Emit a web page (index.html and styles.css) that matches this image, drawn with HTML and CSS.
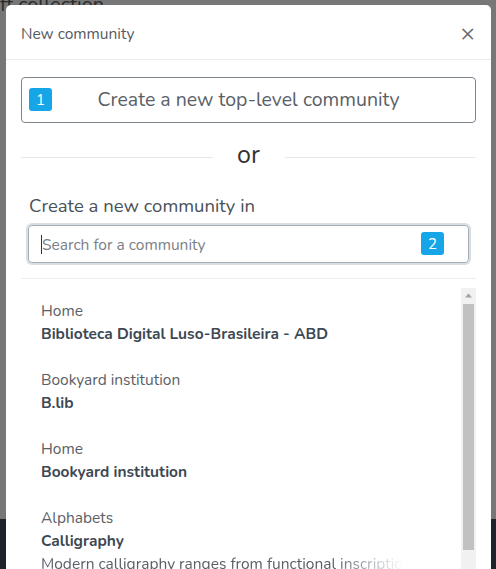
FILE: index.html
```html
<!DOCTYPE html>
<html>
<head>
<meta charset="utf-8">
<link rel="stylesheet" href="styles.css">
</head>
<body>
<div class="page">
  <div class="page-main"><span class="page-text">ff collection</span></div>
  <div class="page-footer"></div>
</div>
<div class="modal">
  <div class="modal-header">
    <span class="modal-title">New community</span>
    <span class="close">&times;</span>
  </div>
  <div class="modal-body">
    <button class="top-btn"><span class="badge badge-1">1</span>Create a new top-level community</button>
    <div class="or-row"><span class="or-line"></span><span class="or-text">or</span><span class="or-line"></span></div>
    <div class="create-in">Create a new community in</div>
    <div class="search">
      <span class="caret"></span><span class="placeholder">Search for a community</span>
      <span class="badge badge-2">2</span>
    </div>
    <div class="divider"></div>
    <div class="list-wrap">
      <div class="list">
        <div class="item"><div class="parent">Home</div><div class="name">Biblioteca Digital Luso-Brasileira - ABD</div></div>
        <div class="item"><div class="parent">Bookyard institution</div><div class="name">B.lib</div></div>
        <div class="item"><div class="parent">Home</div><div class="name">Bookyard institution</div></div>
        <div class="item"><div class="parent">Alphabets</div><div class="name">Calligraphy</div><div class="desc">Modern calligraphy ranges from functional inscriptions</div></div>
        <div class="item"><div class="parent">Home</div><div class="name">Collections</div></div>
      </div>
      <div class="scrollbar">
        <div class="sb-up"><svg width="15" height="15" viewBox="0 0 15 15"><polygon points="4,9.5 7.5,5.5 11,9.5" fill="#a3a3a3"/></svg></div>
        <div class="sb-thumb"></div>
      </div>
    </div>
  </div>
</div>
</body>
</html>
```

FILE: styles.css
```css
html, body {
  margin: 0;
  padding: 0;
}
body {
  width: 496px;
  height: 569px;
  overflow: hidden;
  font-family: "Nunito", "Lato", "Open Sans", sans-serif;
  background: #747474;
}
.page {
  height: 569px;
  display: flex;
  flex-direction: column;
}
.page-main {
  height: 519px;
  background: #777777;
}
.page-text {
  display: block;
  margin: -9px 0 0 0;
  font-size: 20px;
  color: #2a2a2a;
}
.page-footer {
  flex: 1;
  background: #1d2329;
}
.modal {
  position: absolute;
  top: 5px;
  left: 6px;
  width: 485px;
  height: 600px;
  background: #fff;
  border-radius: 5px;
  color: #4a4f55;
}
.modal-header {
  height: 55px;
  box-sizing: border-box;
  border-bottom: 1px solid #e9ecef;
  display: flex;
  align-items: center;
  justify-content: space-between;
  padding: 2px 16px 0 15px;
}
.modal-title {
  font-size: 15.5px;
  color: #555a60;
}
.close {
  font-size: 24px;
  color: #6a6e72;
  line-height: 1;
  margin-top: -1px;
}
.modal-body {
  padding: 17px 15px 0;
}
.top-btn {
  position: relative;
  display: block;
  width: 100%;
  height: 46px;
  border: 1px solid #7d848b;
  border-radius: 4px;
  background: #fff;
  font-family: inherit;
  font-size: 19.5px;
  color: #5a6067;
  padding: 0 0 1px;
  text-align: center;
}
.badge {
  position: absolute;
  width: 23px;
  height: 23px;
  border-radius: 3px;
  background: #16a5e6;
  color: #fff;
  font-size: 15px;
  display: flex;
  align-items: center;
  justify-content: center;
}
.badge-1 {
  left: 7px;
  top: 10px;
}
.or-row {
  display: flex;
  align-items: center;
  margin-top: 16px;
  height: 32px;
}
.or-line {
  flex: 1;
  height: 1px;
  background: #e6e8ea;
  margin-top: 4px;
}
.or-text {
  width: 72px;
  text-align: center;
  font-size: 25px;
  color: #333;
}
.create-in {
  margin: 24px 0 0 8px;
  font-size: 18.5px;
  color: #495057;
  line-height: 22px;
}
.search {
  position: relative;
  margin: 8px 7px 0 7px;
  height: 38px;
  box-sizing: border-box;
  border: 1px solid #a6adb4;
  border-radius: 4px;
  box-shadow: 0 0 0 2px #d9dee3;
  display: flex;
  align-items: center;
  padding-left: 12px;
}
.caret {
  width: 1px;
  height: 19px;
  background: #333;
}
.placeholder {
  font-size: 15.5px;
  color: #7a8086;
}
.badge-2 {
  right: 24px;
  top: 6px;
}
.divider {
  height: 1px;
  background: #eceef0;
  margin-top: 15px;
}
.list-wrap {
  position: relative;
  margin-top: 9px;
  height: 400px;
}
.list {
  height: 100%;
  overflow: hidden;
  padding-right: 15px;
}
.scrollbar {
  position: absolute;
  top: 0;
  right: 0;
  width: 15px;
  height: 100%;
  background: #f1f1f1;
}
.sb-up {
  height: 15px;
}
.sb-up svg {
  display: block;
}
.sb-thumb {
  margin: 1px 2px 0;
  height: 246px;
  background: #c1c1c1;
}
.item {
  padding: 11px 20px 12px;
  font-size: 15.5px;
  line-height: 23px;
  white-space: nowrap;
  overflow: hidden;
}
.parent {
  color: #5b6066;
}
.name {
  font-weight: 700;
  color: #3d4853;
}
.desc {
  color: #5b6066;
  width: 362px;
  overflow: hidden;
  -webkit-mask-image: linear-gradient(to right, #000 0, #000 290px, transparent 362px);
  mask-image: linear-gradient(to right, #000 0, #000 290px, transparent 362px);
}
```
